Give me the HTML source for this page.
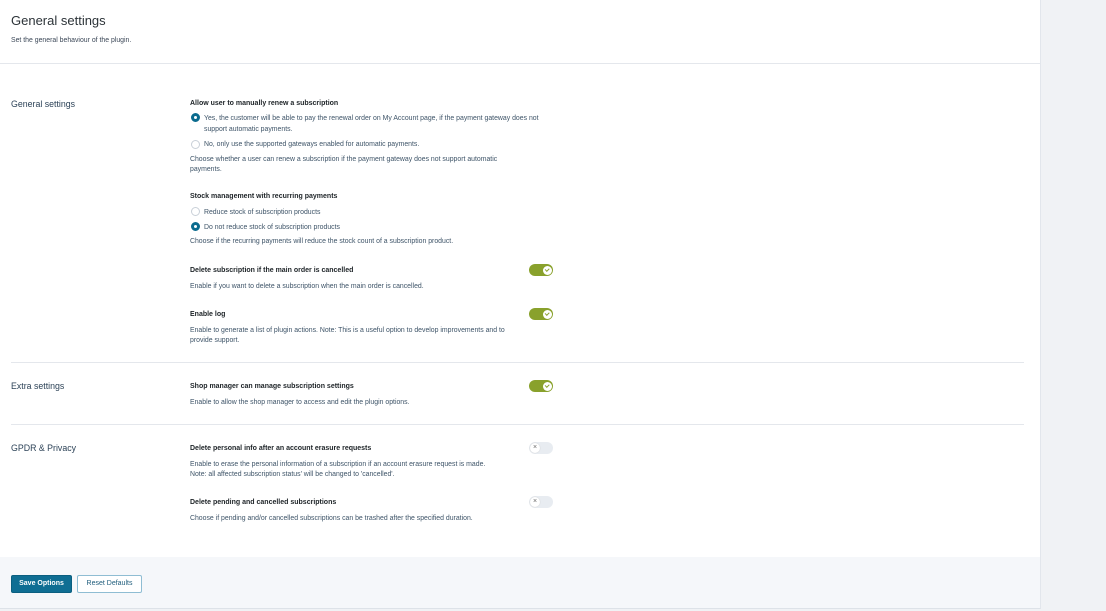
<!DOCTYPE html>
<html><head><meta charset="utf-8"><style>
*{margin:0;padding:0;box-sizing:border-box}
body{width:1106px;height:611px;background:#f0f2f5;font-family:"Liberation Sans",sans-serif;position:relative;overflow:hidden;color:#1d2327}
.panel{position:absolute;left:0;top:0;width:1041px;height:609px;background:#fff;border-right:1px solid #e2e6ec;border-bottom:1px solid #dde2e8}
.t{position:absolute;white-space:nowrap}
.h1{font-size:13px;color:#2c3338;left:11px;top:13px}
.sub{font-size:6.9px;color:#3c4858}
.sec{font-size:8.8px;color:#2c4257;left:11px}
.lab{font-size:7px;font-weight:bold;color:#1d2327;left:190px}
.d{font-size:6.9px;color:#3e5468;left:190px;line-height:10px}
.r{font-size:6.9px;color:#3e5468;left:204px;line-height:11px}
.hr{position:absolute;height:1px;background:#e4e7ec}
.rad{position:absolute;left:191px;width:9px;height:9px;border-radius:50%;border:1px solid #c9d0d8;background:#fff}
.rad.on{border:3px solid #0b6b8e;background:#fff}
.tg{position:absolute;left:529px;width:24px;height:12px;border-radius:6px}
.tg.on{background:#89a12c}
.tg.on::after{content:"";position:absolute;right:1.5px;top:1.5px;width:9px;height:9px;border-radius:50%;background:#fff}
.tg.on::before{content:"";position:absolute;right:4.5px;top:4px;width:3px;height:1.5px;border-left:1px solid #89a12c;border-bottom:1px solid #89a12c;transform:rotate(-45deg);z-index:2}
.tg.off{background:#e8ecf1}
.tg.off::after{content:"×";position:absolute;left:1px;top:1px;width:10px;height:10px;border-radius:50%;background:#fff;font-size:7px;line-height:10px;text-align:center;color:#666;box-shadow:0 0 1px #bbb}
.foot{position:absolute;left:0;top:557px;width:1040px;height:51px;background:#f5f7fa}
.btn{position:absolute;top:575px;height:18px;font-size:7px;font-weight:bold;line-height:16px;text-align:center;border-radius:2px}
</style></head><body>
<div class="panel"></div>
<div class="t h1">General settings</div>
<div class="t sub" style="left:11px;top:37px">Set the general behaviour of the plugin.</div>
<div class="hr" style="left:0;top:63px;width:1040px"></div>

<div class="t sec" style="top:99px">General settings</div>
<div class="t lab" style="top:100px">Allow user to manually renew a subscription</div>
<div class="rad on" style="top:113px"></div>
<div class="t r" style="top:113px">Yes, the customer will be able to pay the renewal order on My Account page, if the payment gateway does not<br>support automatic payments.</div>
<div class="rad" style="top:140px"></div>
<div class="t r" style="top:139px">No, only use the supported gateways enabled for automatic payments.</div>
<div class="t d" style="top:155px">Choose whether a user can renew a subscription if the payment gateway does not support automatic<br>payments.</div>

<div class="t lab" style="top:193px">Stock management with recurring payments</div>
<div class="rad" style="top:207px"></div>
<div class="t r" style="top:207px">Reduce stock of subscription products</div>
<div class="rad on" style="top:222px"></div>
<div class="t r" style="top:222px">Do not reduce stock of subscription products</div>
<div class="t d" style="top:237px">Choose if the recurring payments will reduce the stock count of a subscription product.</div>

<div class="t lab" style="top:267px">Delete subscription if the main order is cancelled</div>
<div class="tg on" style="top:264px"></div>
<div class="t d" style="top:282px">Enable if you want to delete a subscription when the main order is cancelled.</div>

<div class="t lab" style="top:311px">Enable log</div>
<div class="tg on" style="top:308px"></div>
<div class="t d" style="top:326px">Enable to generate a list of plugin actions. Note: This is a useful option to develop improvements and to<br>provide support.</div>

<div class="hr" style="left:11px;top:362px;width:1013px"></div>
<div class="t sec" style="top:381px">Extra settings</div>
<div class="t lab" style="top:383px">Shop manager can manage subscription settings</div>
<div class="tg on" style="top:380px"></div>
<div class="t d" style="top:398px">Enable to allow the shop manager to access and edit the plugin options.</div>

<div class="hr" style="left:11px;top:424px;width:1013px"></div>
<div class="t sec" style="top:443px">GPDR &amp; Privacy</div>
<div class="t lab" style="top:445px">Delete personal info after an account erasure requests</div>
<div class="tg off" style="top:442px"></div>
<div class="t d" style="top:460px">Enable to erase the personal information of a subscription if an account erasure request is made.<br>Note: all affected subscription status' will be changed to 'cancelled'.</div>

<div class="t lab" style="top:499px">Delete pending and cancelled subscriptions</div>
<div class="tg off" style="top:496px"></div>
<div class="t d" style="top:514px">Choose if pending and/or cancelled subscriptions can be trashed after the specified duration.</div>

<div class="foot"></div>
<div class="btn" style="left:11px;width:61px;background:#0f6e93;color:#fff;border:1px solid #0b5f80">Save Options</div>
<div class="btn" style="left:77px;width:65px;background:#fff;color:#1f5d7c;border:1px solid #8fbdd3;font-weight:normal">Reset Defaults</div>
</body></html>
